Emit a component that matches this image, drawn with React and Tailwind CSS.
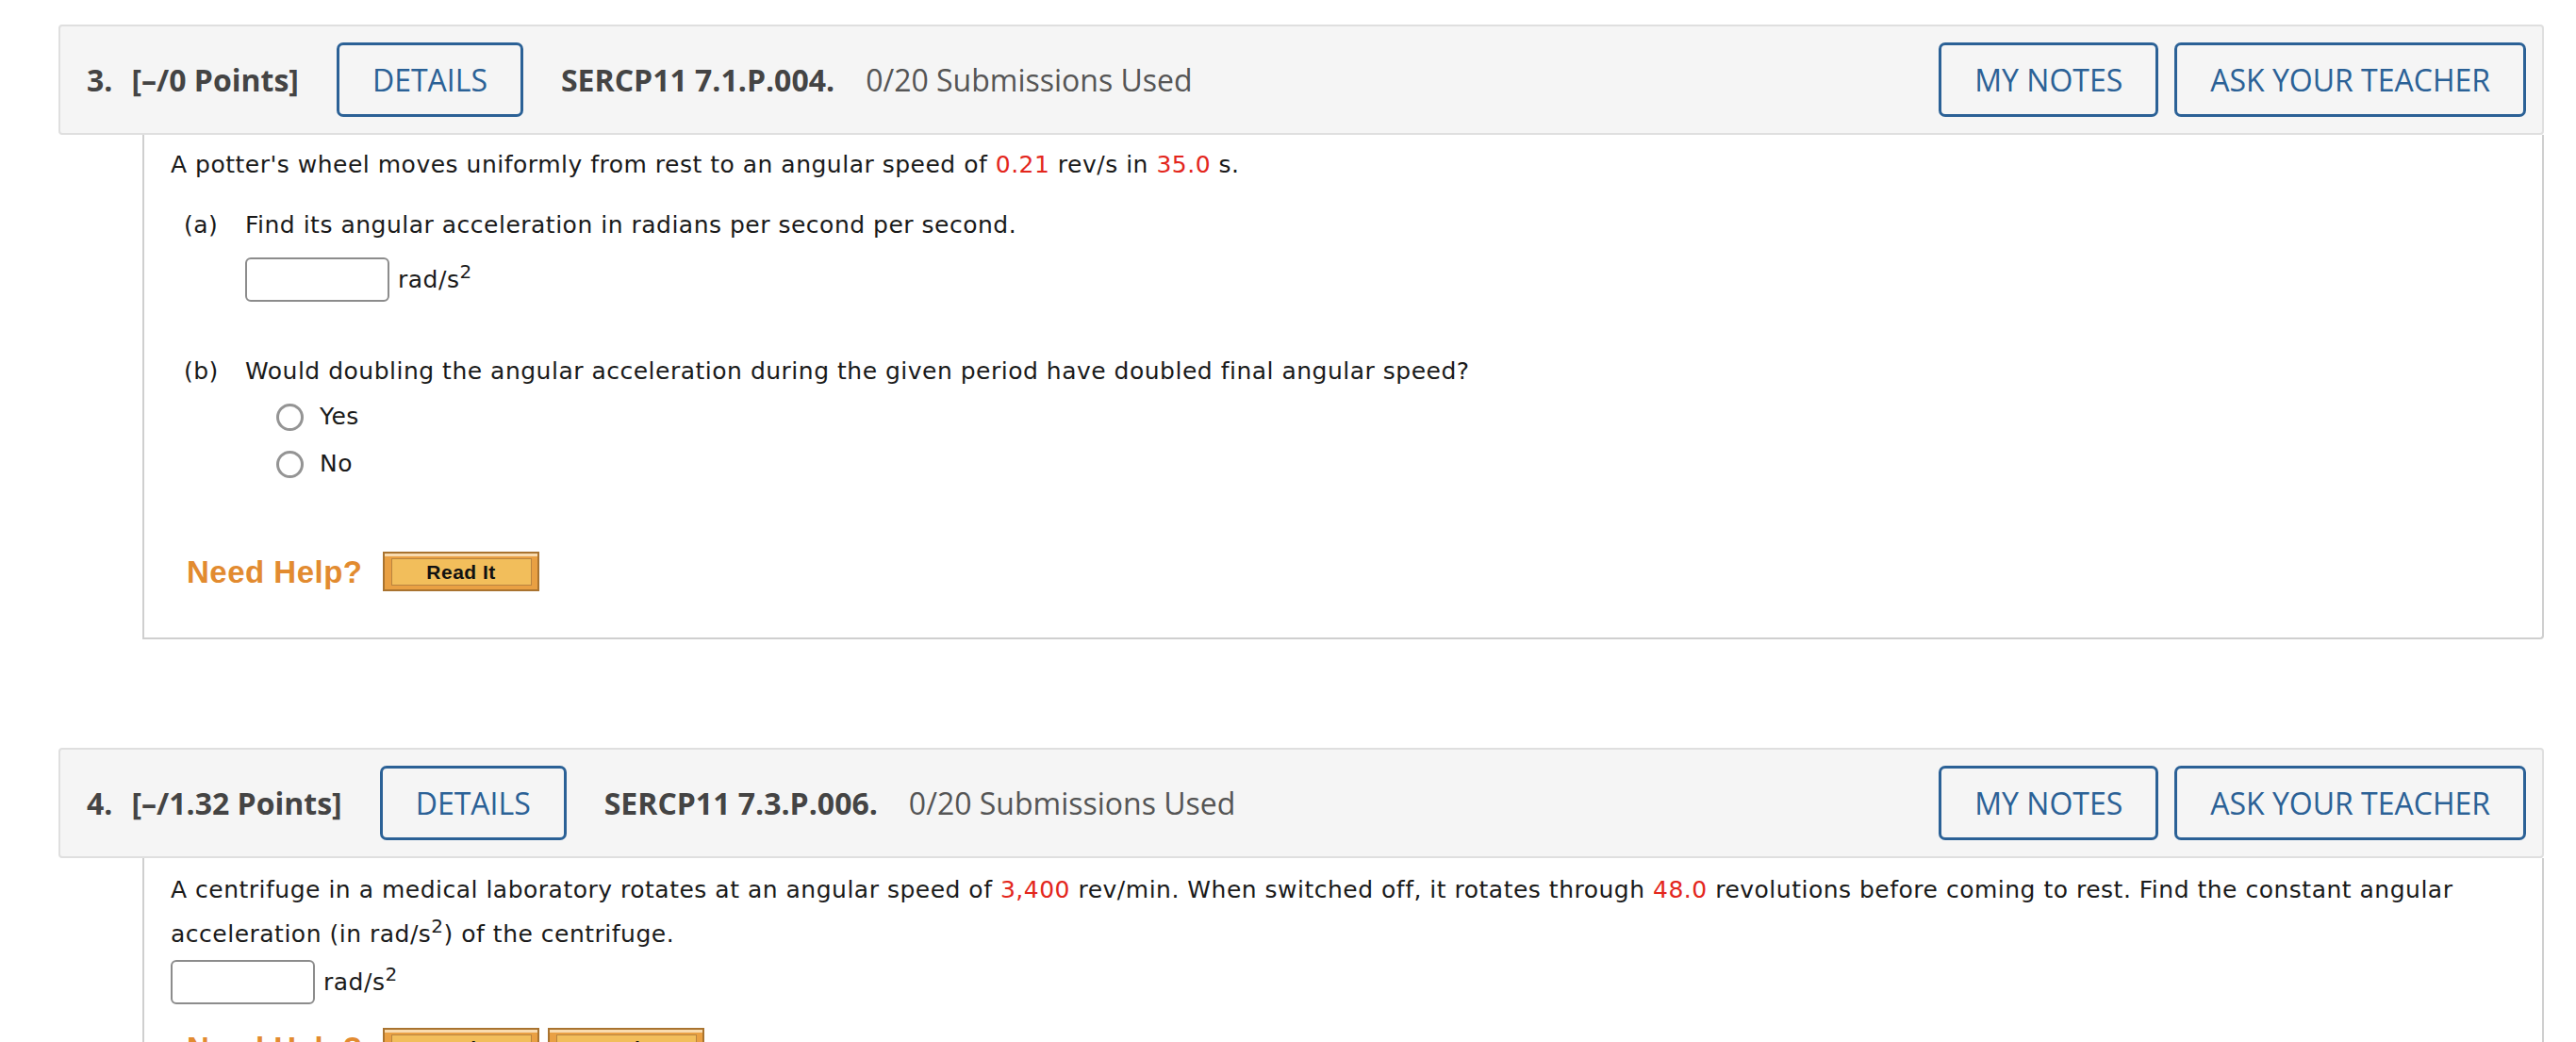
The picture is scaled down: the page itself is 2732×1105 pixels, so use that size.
import React from "react";

const Red = ({ children }) => <span className="text-[#e3261c]">{children}</span>;

function OutlineButton({ children }) {
  return (
    <button className="flex h-[79px] shrink-0 items-center rounded-[7px] border-[3px] border-[#2b6196] px-[35px] text-[32px] text-[#2b6196]">
      {children}
    </button>
  );
}

function QuestionHeader({ num, points, code }) {
  return (
    <div className="flex h-[117px] items-center rounded-[4px] border-2 border-[#dfdfdf] bg-[#f5f5f5] pl-[28px] pr-[17px] font-['Open_Sans',sans-serif] leading-none">
      <span className="text-[32px] font-bold text-[#444]">{num}.</span>
      <span className="ml-[20px] text-[32px] font-bold text-[#444]">{points}</span>
      <div className="ml-[40px]">
        <OutlineButton>DETAILS</OutlineButton>
      </div>
      <span className="ml-[40px] text-[32px] font-bold text-[#444]">{code}</span>
      <span className="ml-[33px] text-[32px] text-[#555]">0/20 Submissions Used</span>
      <div className="ml-auto flex gap-[17px]">
        <OutlineButton>MY NOTES</OutlineButton>
        <OutlineButton>ASK YOUR TEACHER</OutlineButton>
      </div>
    </div>
  );
}

function HelpButton({ label }) {
  return (
    <div className="flex h-[42px] w-[166px] shrink-0 border-2 border-[#a9732f] bg-[#e9a043] pt-[5px] pr-[6px] pb-[4px] pl-[7px] shadow-[inset_0_3px_0_#f9dcb0]">
      <div className="flex flex-1 items-center justify-center border border-[#b9843f] bg-[#f2be5b] font-['Liberation_Sans',sans-serif] text-[21px] font-bold leading-none text-[#111]">
        {label}
      </div>
    </div>
  );
}

function NeedHelp({ buttons }) {
  return (
    <div className="flex items-center">
      <span className="ml-[17px] font-['Liberation_Sans',sans-serif] text-[33px] font-bold leading-none text-[#e28b30]">
        Need Help?
      </span>
      <div className="ml-[21px] flex gap-[9px]">
        {buttons.map((b) => (
          <HelpButton key={b} label={b} />
        ))}
      </div>
    </div>
  );
}

function AnswerBox() {
  return <span className="h-[47px] w-[153px] shrink-0 rounded-[6px] border-2 border-[#8c8c8c] bg-white" />;
}

function Units() {
  return (
    <span className="ml-[9px]">
      rad/s<sup className="text-[20px]">2</sup>
    </span>
  );
}

function Radio({ label, className = "" }) {
  return (
    <div className={"flex h-[36px] items-center " + className}>
      <span className="h-[29px] w-[29px] shrink-0 rounded-full border-[3px] border-[#949494] bg-white" />
      <span className="ml-[17px] leading-[36px]">{label}</span>
    </div>
  );
}

export default function App() {
  return (
    <div className="min-h-screen bg-white pt-[26px] pl-[62px] pr-[34px]">
      {/* question 3 */}
      <QuestionHeader num="3" points="[–/0 Points]" code="SERCP11 7.1.P.004." />
      <div className="ml-[89px] rounded-br-[4px] border-x-2 border-b-2 border-[#cfcfcf] pt-[8px] pr-[28px] pb-[49px] pl-[28px] font-['DejaVu_Sans',sans-serif] text-[25px] leading-[47px] tracking-[0.5px] text-[#1a1a1a]">
        <p>
          A potter's wheel moves uniformly from rest to an angular speed of <Red>0.21</Red> rev/s in{" "}
          <Red>35.0</Red> s.
        </p>

        <div className="mt-[17px] flex">
          <span className="ml-[14px] w-[65px]">(a)</span>
          <span>Find its angular acceleration in radians per second per second.</span>
        </div>
        <div className="mt-[11px] ml-[79px] flex items-center">
          <AnswerBox />
          <Units />
        </div>

        <div className="mt-[50px] flex">
          <span className="ml-[14px] w-[65px]">(b)</span>
          <span>Would doubling the angular acceleration during the given period have doubled final angular speed?</span>
        </div>
        <div className="ml-[112px]">
          <Radio label="Yes" className="mt-[7px]" />
          <Radio label="No" className="mt-[14px]" />
        </div>

        <div className="mt-[75px]">
          <NeedHelp buttons={["Read It"]} />
        </div>
      </div>

      {/* question 4 */}
      <div className="mt-[115px]">
        <QuestionHeader num="4" points="[–/1.32 Points]" code="SERCP11 7.3.P.006." />
      </div>
      <div className="ml-[89px] border-x-2 border-[#cfcfcf] pt-[10px] pr-[28px] pb-[40px] pl-[28px] font-['DejaVu_Sans',sans-serif] text-[25px] leading-[47px] tracking-[0.5px] text-[#1a1a1a]">
        <p>
          A centrifuge in a medical laboratory rotates at an angular speed of <Red>3,400</Red> rev/min. When
          switched off, it rotates through <Red>48.0</Red> revolutions before coming to rest. Find the constant
          angular acceleration (in rad/s<sup className="text-[20px]">2</sup>) of the centrifuge.
        </p>
        <div className="mt-[4px] flex items-center">
          <AnswerBox />
          <Units />
        </div>
        <div className="mt-[25px]">
          <NeedHelp buttons={["Read It", "Watch It"]} />
        </div>
      </div>
    </div>
  );
}
